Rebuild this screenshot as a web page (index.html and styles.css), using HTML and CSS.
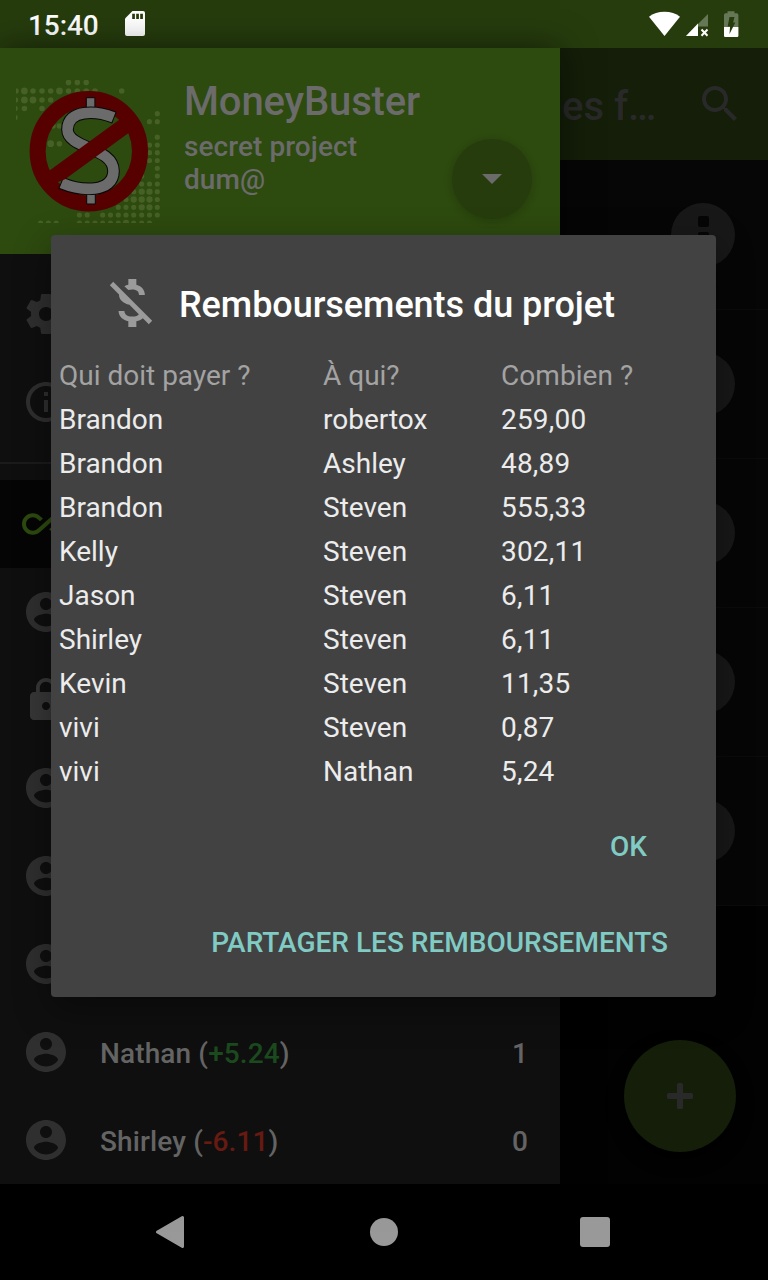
FILE: index.html
```html
<!DOCTYPE html>
<html lang="fr">
<head>
<meta charset="utf-8">
<title>MoneyBuster</title>
<link rel="stylesheet" href="styles.css">
</head>
<body>
<svg class="defs" width="0" height="0">
  <symbol id="account" viewBox="0 0 24 24"><path d="M12 2C6.48 2 2 6.48 2 12s4.48 10 10 10 10-4.48 10-10S17.52 2 12 2zm0 3c1.66 0 3 1.34 3 3s-1.340 3-3 3-3-1.340-3-3 1.340-3 3-3zm0 14.200c-2.500 0-4.710-1.280-6-3.220.030-1.990 4-3.080 6-3.080 1.990 0 5.970 1.090 6 3.080-1.290 1.940-3.500 3.220-6 3.220z"/></symbol>
  <symbol id="lock" viewBox="0 0 24 24"><path d="M18 8h-1V6c0-2.760-2.240-5-5-5S7 3.240 7 6v2H6c-1.100 0-2 .9-2 2v10c0 1.100.9 2 2 2h12c1.100 0 2-.9 2-2V10c0-1.100-.9-2-2-2zm-6 9c-1.100 0-2-.9-2-2s.9-2 2-2 2 .9 2 2-.9 2-2 2zm3.100-9H8.900V6c0-1.710 1.390-3.100 3.100-3.100s3.100 1.390 3.100 3.100v2z"/></symbol>
  <symbol id="infinity" viewBox="0 0 24 24"><path d="M18.600 6.620c-1.440 0-2.800.56-3.770 1.530L12 10.660 10.480 12h.01L7.800 14.390c-.64.64-1.490.99-2.400.99-1.870 0-3.390-1.510-3.390-3.380S3.530 8.620 5.400 8.620c.91 0 1.760.35 2.440 1.030l1.130 1 1.510-1.340L9.220 8.200C8.200 7.180 6.840 6.620 5.400 6.620 2.420 6.620 0 9.040 0 12s2.420 5.380 5.400 5.380c1.440 0 2.800-.56 3.770-1.530l2.830-2.500.01.010L13.520 12h-.01l2.690-2.390c.64-.64 1.490-.99 2.400-.99 1.870 0 3.390 1.510 3.390 3.380s-1.520 3.380-3.390 3.380c-.9 0-1.760-.35-2.440-1.030l-1.140-1.010-1.510 1.340 1.270 1.120c1.020 1.010 2.370 1.570 3.820 1.570 2.980 0 5.400-2.410 5.400-5.380s-2.420-5.370-5.400-5.370z"/></symbol>
</svg>
<div class="screen">
  <header class="status">
    <span class="clock">15:40</span>
    <svg class="sd" width="20" height="26" viewBox="0 0 20 26"><path fill="#fff" d="M7.500 0H18a2 2 0 0 1 2 2v21a2 2 0 0 1-2 2H2a2 2 0 0 1-2-2V7.500z"/><path fill="#263c0d" d="M7.200 2.700h2.700v5.300H7.200zM11.200 2.700h2.700v5.300h-2.700zM15.200 2.700h2.700v5.300h-2.700z"/></svg>
    <svg class="signals" width="92" height="28" viewBox="648 10 92 28">
      <path fill="#fff" d="M664.500 36 649 16.700C653 13.300 658.500 11.700 664.500 11.700S676 13.300 680 16.700z"/>
      <path fill="#667755" d="M708 14v12.500h-10V36h-12z"/>
      <path fill="#fff" d="M698 23.500V36h-12z"/>
      <path stroke="#fff" stroke-width="2" fill="none" d="M701.500 29.500l6 6.200M707.500 29.500l-6 6.200"/>
      <path fill="#667755" d="M727.500 11.300h7V13.300h2.300a1.600 1.600 0 0 1 1.600 1.600V27H724V14.900a1.600 1.600 0 0 1 1.600-1.600h1.900z"/>
      <path fill="#fff" d="M724 27h14.400v8.700a1.200 1.200 0 0 1-1.200 1.200h-12a1.200 1.200 0 0 1-1.200-1.200z"/>
      <path fill="#263c0d" d="M729.500 17h5l-1.400 5.500h2.200l-5.800 11.500.6-7.500h-2.400z"/>
    </svg>
  </header>

  <div class="app">
    <aside class="drawer">
      <div class="profile">
        <svg class="logo" width="144" height="143" viewBox="16 80 144 143">
          <g class="dots" fill="none" stroke="#466025" stroke-linecap="round">
            <path stroke-width="5.600" d="M68.500 82.400h0M77.300 82.400h0M86.200 82.400h0M16 91h0M33 91h0M42 91h0M50.700 91h0M68.500 91h0M77.300 91h0M86.200 91h0M95 91h0M121.700 91h0M15.500 100h0M42 100h0M50.700 100h0M15 108.500h0M24.400 108.500h0M42 108.500h0M15 117.500h0M53 126h0M59.400 126h0M59.400 143.700h0"/>
            <path stroke-width="6.800" d="M24.400 91h0M59.500 91h0M24.400 100h0M33 100h0M50.700 143.700h0"/>
            <path stroke-width="5.200" d="M157.300 113.700h0M149.400 121.700h0M157.300 121.700h0M157.300 137.200h0M157.300 145h0M149.500 145h0M149.500 152.700h0M157.300 152.700h0M149.500 160.500h0M157.300 160.500h0M157.300 168.300h0M157.300 176h0M141.700 176h0M141.700 184h0M149.500 184h0M157.300 184h0M133.700 191.700h0M157.300 191.700h0M126 199.500h0M157.300 199.500h0M118.300 207.300h0M126 207.300h0M133.700 207.300h0M157.300 207.300h0M79.400 215h0M87.200 215h0M102.700 215h0M110.500 215h0M118.300 215h0M126 215h0M133.700 215h0M141.700 215h0M149.500 215h0M157.300 215h0M40.600 223h0M48.400 223h0M56.200 223h0M79.400 223h0M87.200 223h0M95 223h0M102.700 223h0M110.500 223h0M118.300 223h0M133.700 223h0M141.700 223h0M149.500 223h0"/>
            <path stroke-width="6.300" d="M141.700 191.700h0M149.500 191.700h0M133.700 199.500h0M141.700 199.500h0M149.500 199.500h0M141.700 207.300h0M149.500 207.300h0M126 223h0"/>
          </g>
          <ellipse cx="88.800" cy="151.200" rx="51.200" ry="52.200" fill="none" stroke="#560000" stroke-width="16"/>
          <g fill="#6b6b6b" stroke="#080808" stroke-width="1">
            <path d="M86.300 97.700h8.600v12h-8.600zM86.700 192h8.600v12h-8.600z"/>
          </g>
          <path class="s-edge" d="M114.400 117.700C96 110.500 67.500 109 67.500 129.500C67.500 149 113.500 147 113.500 171C113.500 193 82 191.500 60.700 182.800"/>
          <path class="s-fill" d="M113.500 117.400C96 110.500 67.500 109 67.500 129.500C67.500 149 113.500 147 113.500 171C113.500 193 82 191.500 61.600 183.200"/>
          <path fill="#560000" d="M42 176 119 120 122 117 132 130.500 65 179.300 50 185z"/>
        </svg>
        <div class="who">
          <div class="name">MoneyBuster</div>
          <div class="project">secret project<br>dum@</div>
        </div>
        <div class="drop"><svg width="20" height="10" viewBox="0 0 20 10"><path fill="#6b6b6b" d="M0 0h20L10 10z"/></svg></div>
      </div>
      <div class="tools">
        <div class="item"><svg class="ic" viewBox="0 0 24 24"><path d="M19.430 12.980c.040-.32.070-.64.070-.98s-.030-.66-.070-.98l2.110-1.650c.19-.15.240-.42.120-.64l-2-3.460c-.12-.22-.39-.3-.61-.22l-2.490 1c-.52-.4-1.080-.73-1.690-.98l-.38-2.650C14.460 2.180 14.250 2 14 2h-4c-.25 0-.46.180-.49.420l-.38 2.650c-.61.250-1.170.59-1.690.98l-2.490-1c-.23-.09-.49 0-.61.220l-2 3.460c-.13.220-.070.490.120.640l2.110 1.650c-.040.320-.070.650-.070.980s.030.660.070.980l-2.110 1.650c-.19.150-.240.420-.12.640l2 3.460c.12.220.39.300.61.220l2.490-1c.52.400 1.080.73 1.690.98l.38 2.650c.030.240.240.420.490.420h4c.25 0 .46-.18.490-.42l.38-2.650c.61-.25 1.170-.59 1.690-.98l2.490 1c.23.090.49 0 .61-.22l2-3.460c.12-.22.070-.49-.12-.64l-2.110-1.650zM12 15.500c-1.930 0-3.500-1.570-3.500-3.500s1.570-3.500 3.500-3.500 3.500 1.570 3.500 3.500-1.570 3.500-3.500 3.500z"/></svg></div>
        <div class="item"><svg class="ic" viewBox="0 0 24 24"><path d="M11 7h2v2h-2zm0 4h2v6h-2zm1-9C6.480 2 2 6.480 2 12s4.480 10 10 10 10-4.480 10-10S17.520 2 12 2zm0 18c-4.410 0-8-3.590-8-8s3.590-8 8-8 8 3.590 8 8-3.590 8-8 8z"/></svg></div>
      </div>
      <div class="members">
        <div class="item selected"><svg class="ic"><use href="#infinity"/></svg></div>
        <div class="item"><svg class="ic"><use href="#account"/></svg></div>
        <div class="item"><svg class="ic light"><use href="#lock"/></svg></div>
        <div class="item"><svg class="ic"><use href="#account"/></svg></div>
        <div class="item"><svg class="ic"><use href="#account"/></svg></div>
        <div class="item"><svg class="ic"><use href="#account"/></svg></div>
        <div class="item"><svg class="ic"><use href="#account"/></svg><span class="label">Nathan (<b class="plus">+5.24</b>)</span><span class="count">1</span></div>
        <div class="item"><svg class="ic"><use href="#account"/></svg><span class="label">Shirley (<b class="minus">-6.11</b>)</span><span class="count">0</span></div>
      </div>
    </aside>

    <main class="bills">
      <div class="toolbar"><span class="heading">es f…</span><svg class="search" width="48" height="48" viewBox="0 0 24 24"><path fill="#292929" d="M15.500 14h-.79l-.28-.27C15.410 12.590 16 11.110 16 9.500 16 5.910 13.090 3 9.500 3S3 5.910 3 9.500 5.910 16 9.500 16c1.610 0 3.090-.59 4.230-1.570l.27.28v.79l5 4.990L20.490 19l-4.990-5zm-6 0C7.010 14 5 11.990 5 9.500S7.010 5 9.500 5 14 7.010 14 9.500 11.990 14 9.500 14z"/></svg></div>
      <div class="bill"><div class="avatar"><i></i><i></i><i></i></div></div>
      <div class="bill"><div class="avatar"></div></div>
      <div class="bill"><div class="avatar"></div></div>
      <div class="bill"><div class="avatar"></div></div>
      <div class="bill"><div class="avatar"></div></div>
      <div class="fab"><svg width="26" height="26" viewBox="0 0 26 26"><path fill="#292929" d="M11.500 0h3a1.500 1.500 0 0 1 1.500 1.500V10h8.500a1.500 1.500 0 0 1 1.500 1.500v3a1.500 1.500 0 0 1-1.500 1.500H16v8.500a1.500 1.500 0 0 1-1.500 1.500h-3a1.500 1.500 0 0 1-1.500-1.500V16H1.500A1.500 1.500 0 0 1 0 14.500v-3A1.500 1.500 0 0 1 1.500 10H10V1.500A1.500 1.500 0 0 1 11.500 0z"/></svg></div>
    </main>
  </div>

  <nav class="navbar">
    <svg width="28" height="34" viewBox="0 0 28 34"><path fill="#999" stroke="#999" stroke-width="3" stroke-linejoin="round" d="M26.500 2.500v29L1.500 17z"/></svg>
    <span class="home"></span>
    <span class="recent"></span>
  </nav>

  <section class="dialog">
    <div class="title">
      <svg width="64" height="64" viewBox="0 0 24 24"><path fill="#9b9b9b" d="M12.500 6.900c1.780 0 2.440.85 2.500 2.100h2.210c-.07-1.720-1.120-3.300-3.210-3.810V3h-3v2.160c-.53.12-1.030.3-1.480.54l1.470 1.470c.41-.17.91-.27 1.510-.27zM5.330 4.060L4.060 5.330 7.500 8.770c0 2.080 1.560 3.210 3.910 3.910l3.510 3.510c-.34.48-1.050.91-2.420.91-2.060 0-2.870-.92-2.980-2.100h-2.200c.12 2.190 1.760 3.420 3.680 3.830V21h3v-2.150c.96-.18 1.820-.55 2.450-1.120l2.220 2.220 1.270-1.270L5.330 4.060z"/></svg>
      <h1>Remboursements du projet</h1>
    </div>
    <div class="table">
      <div class="row head"><span>Qui doit payer ?</span><span>À qui?</span><span>Combien ?</span></div>
      <div class="row"><span>Brandon</span><span>robertox</span><span>259,00</span></div>
      <div class="row"><span>Brandon</span><span>Ashley</span><span>48,89</span></div>
      <div class="row"><span>Brandon</span><span>Steven</span><span>555,33</span></div>
      <div class="row"><span>Kelly</span><span>Steven</span><span>302,11</span></div>
      <div class="row"><span>Jason</span><span>Steven</span><span>6,11</span></div>
      <div class="row"><span>Shirley</span><span>Steven</span><span>6,11</span></div>
      <div class="row"><span>Kevin</span><span>Steven</span><span>11,35</span></div>
      <div class="row"><span>vivi</span><span>Steven</span><span>0,87</span></div>
      <div class="row"><span>vivi</span><span>Nathan</span><span>5,24</span></div>
    </div>
    <div class="actions">
      <div class="btn ok">OK</div>
      <div class="btn">PARTAGER LES REMBOURSEMENTS</div>
    </div>
  </section>
</div>
</body>
</html>
```
FILE: styles.css
```css
* { box-sizing: border-box; }
body { margin: 0; background: #000; font-family: Roboto, "Liberation Sans", sans-serif; }
svg { display: block; flex: none; }
.defs { position: absolute; }
.screen { position: relative; width: 768px; height: 1280px; overflow: hidden; display: flex; flex-direction: column; white-space: nowrap; }

.status { height: 48px; flex: none; background: #263c0d; display: flex; align-items: center; padding: 0 28px; }
.clock { color: #fff; font-size: 28px; font-weight: 500; line-height: 48px; padding-top: 3px; width: 97px; letter-spacing: -0.1px; }
.signals { margin-left: auto; }

.app { height: 1136px; flex: none; display: flex; }
.drawer { width: 560px; flex: none; background: #0f0f0f; display: flex; flex-direction: column; z-index: 1; box-shadow: 0 0 32px rgba(0,0,0,.5); }
.profile { height: 206px; flex: none; background: #2d4a0f; display: flex; padding: 32px 28px 0 16px; }
.s-edge, .s-fill { fill: none; }
.s-edge { stroke: #080808; stroke-width: 12.6; }
.s-fill { stroke: #6b6b6b; stroke-width: 10.6; }
.who { margin-left: 24px; width: 268px; color: #6b6b6b; font-weight: 500; }
.name { font-size: 40px; line-height: 44px; letter-spacing: -0.15px; }
.project { font-size: 28px; line-height: 33px; padding-top: 6px; letter-spacing: 0.07px; }
.drop { width: 80px; height: 80px; margin-top: 59px; border-radius: 50%; background: #263c0d; display: flex; align-items: center; justify-content: center; box-shadow: 0 2px 8px rgba(0,0,0,.18); }
.tools { height: 210px; flex: none; padding-top: 16px; border-bottom: 2px solid #1b1b1b; }
.members { padding-top: 16px; }
.item { height: 88px; padding: 0 32px 0 22px; display: flex; align-items: center; font-size: 28px; font-weight: 500; color: #646464; }
.selected { background: #050505; }
.ic { width: 48px; height: 48px; fill: #2f2f2f; }
.selected .ic { fill: #2d4a0f; }
.ic.light { fill: #373737; }
.label { margin-left: 30px; padding-top: 2px; letter-spacing: 0.12px; }
.label b { font-weight: 500; }
.plus { color: #1b4a1e; }
.minus { color: #661a12; }
.count { margin-left: auto; padding-top: 2px; }

.bills { width: 208px; background: #020202; position: relative; }
.toolbar { height: 112px; background: #141e08; display: flex; align-items: center; padding-left: 2px; }
.heading { width: 134px; color: #292929; font-size: 40px; font-weight: 500; padding-top: 4px; }
.bill { height: 149px; background: #060606; border-bottom: 1px solid #0b0b0b; padding: 42px 0 0 111px; }
.toolbar + .bill { height: 150px; padding-top: 43px; }
.avatar { width: 64px; height: 64px; border-radius: 50%; background: #181818; display: flex; flex-direction: column; align-items: center; gap: 5px; padding-top: 13px; }
.avatar i { width: 11px; height: 11px; border-radius: 2px; background: #060606; }
.fab { position: absolute; right: 32px; bottom: 32px; width: 112px; height: 112px; border-radius: 50%; background: #141e08; display: flex; align-items: center; justify-content: center; box-shadow: 0 8px 16px #000; }

.navbar { height: 96px; background: #000; display: flex; align-items: center; padding-left: 156px; }
.home { width: 28px; height: 28px; border-radius: 50%; background: #999; margin-left: 186px; }
.recent { width: 30px; height: 30px; border-radius: 3px; background: #999; margin-left: 182px; }

.dialog { position: absolute; left: 51px; top: 235px; width: 665px; height: 762px; z-index: 2; background: #424242; border-radius: 4px; box-shadow: 0 12px 36px rgba(0,0,0,.38); }
.title { display: flex; align-items: center; gap: 16px; padding: 36px 0 0 48px; height: 100px; }
.title h1 { margin: 0; padding-top: 3px; font-size: 36px; font-weight: 500; color: #fff; letter-spacing: -0.05px; }
.table { padding: 19px 8px 0; }
.row { display: grid; grid-template-columns: 264px 178px 1fr; height: 44px; line-height: 44px; font-size: 28px; color: #ececec; }
.row span:nth-child(3) { letter-spacing: 0.2px; }
.head { color: #a3a3a3; }
.head span:nth-child(3) { letter-spacing: 0.05px; }
.actions { display: flex; flex-direction: column; align-items: flex-end; padding: 4px 48px 0 0; }
.btn { height: 96px; line-height: 97px; font-size: 28px; font-weight: 500; color: #80cbc4; }
.ok { padding-right: 21px; }
```
